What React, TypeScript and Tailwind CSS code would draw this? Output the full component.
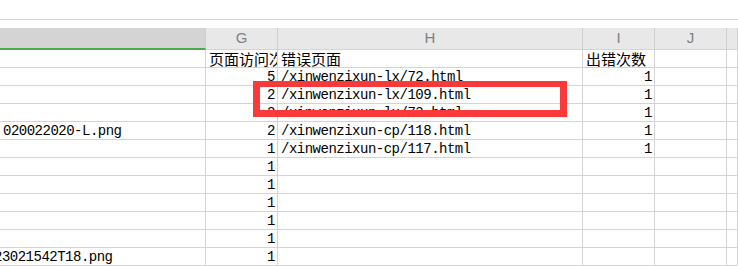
import React from "react";

const mono = { fontFamily: '"Liberation Mono", "Noto Sans CJK SC", monospace' };

type Row = { f?: string; fShift?: boolean; g?: string; h?: string; i?: string };

const rows: Row[] = [
  { g: "页面访问次数", h: "错误页面", i: "出错次数" },
  { g: "5", h: "/xinwenzixun-lx/72.html", i: "1" },
  { g: "2", h: "/xinwenzixun-lx/109.html", i: "1" },
  { g: "2", h: "/xinwenzixun-lx/73.html", i: "1" },
  { f: "020022020-L.png", g: "2", h: "/xinwenzixun-cp/118.html", i: "1" },
  { g: "1", h: "/xinwenzixun-cp/117.html", i: "1" },
  { g: "1" },
  { g: "1" },
  { g: "1" },
  { g: "1" },
  { g: "1" },
  { f: "23021542T18.png", fShift: true, g: "1" },
];

const cols = "grid grid-cols-[206px_72px_305px_72px_72px_1fr]";

function Cell({
  children,
  align = "left",
  cjk = false,
  shift = false,
}: {
  children?: React.ReactNode;
  align?: "left" | "right";
  cjk?: boolean;
  shift?: boolean;
}) {
  return (
    <div
      className={`h-[18px] border-r border-b border-[#d4d4d4] overflow-hidden flex items-center whitespace-nowrap text-black ${
        align === "right" ? "justify-end pr-[2px]" : "pl-[3px]"
      }`}
    >
      {children !== undefined && (
        <span
          className={
            cjk
              ? "text-[15px] leading-none"
              : `text-[14px] tracking-[-0.5px] leading-none ${shift ? "-ml-[9px]" : ""}`
          }
          style={
            cjk
              ? { fontFamily: '"Noto Sans CJK SC", "Liberation Sans", sans-serif' }
              : mono
          }
        >
          {children}
        </span>
      )}
    </div>
  );
}

function HeaderCell({ label, selected = false }: { label?: string; selected?: boolean }) {
  return (
    <div
      className={`h-[22px] border-r border-[#cfcfcf] flex items-center justify-center text-[15px] text-[#808080] ${
        selected ? "bg-[#d4d4d4] border-b-2 border-b-[#4aa94a]" : "bg-[#e8e8e8] border-b border-b-[#d4d4d4]"
      }`}
      style={{ fontFamily: '"Liberation Sans", Arial, sans-serif' }}
    >
      {label}
    </div>
  );
}

export default function App() {
  return (
    <div className="relative w-[738px] h-[266px] overflow-hidden bg-white">
      <div className="h-[19px] bg-white" />
      <div className="h-px bg-[#d4d4d4]" />
      <div className="h-[8px] bg-white" />

      <div className={cols}>
        <HeaderCell selected />
        <HeaderCell label="G" />
        <HeaderCell label="H" />
        <HeaderCell label="I" />
        <HeaderCell label="J" />
        <HeaderCell />
      </div>

      {rows.map((r, idx) => {
        const header = idx === 0;
        return (
          <div key={idx} className={cols}>
            <Cell shift={r.fShift}>{r.f}</Cell>
            <Cell align={header ? "left" : "right"} cjk={header}>
              {r.g}
            </Cell>
            <Cell cjk={header}>{r.h}</Cell>
            <Cell align={header ? "left" : "right"} cjk={header}>
              {r.i}
            </Cell>
            <Cell />
            <Cell />
          </div>
        );
      })}

      {/* highlight frame around the 109.html row */}
      <div className="absolute left-[253px] top-[81px] w-[314px] h-[36px] border-[7px] border-t-[6px] border-[#fa3a3a]" />
    </div>
  );
}
